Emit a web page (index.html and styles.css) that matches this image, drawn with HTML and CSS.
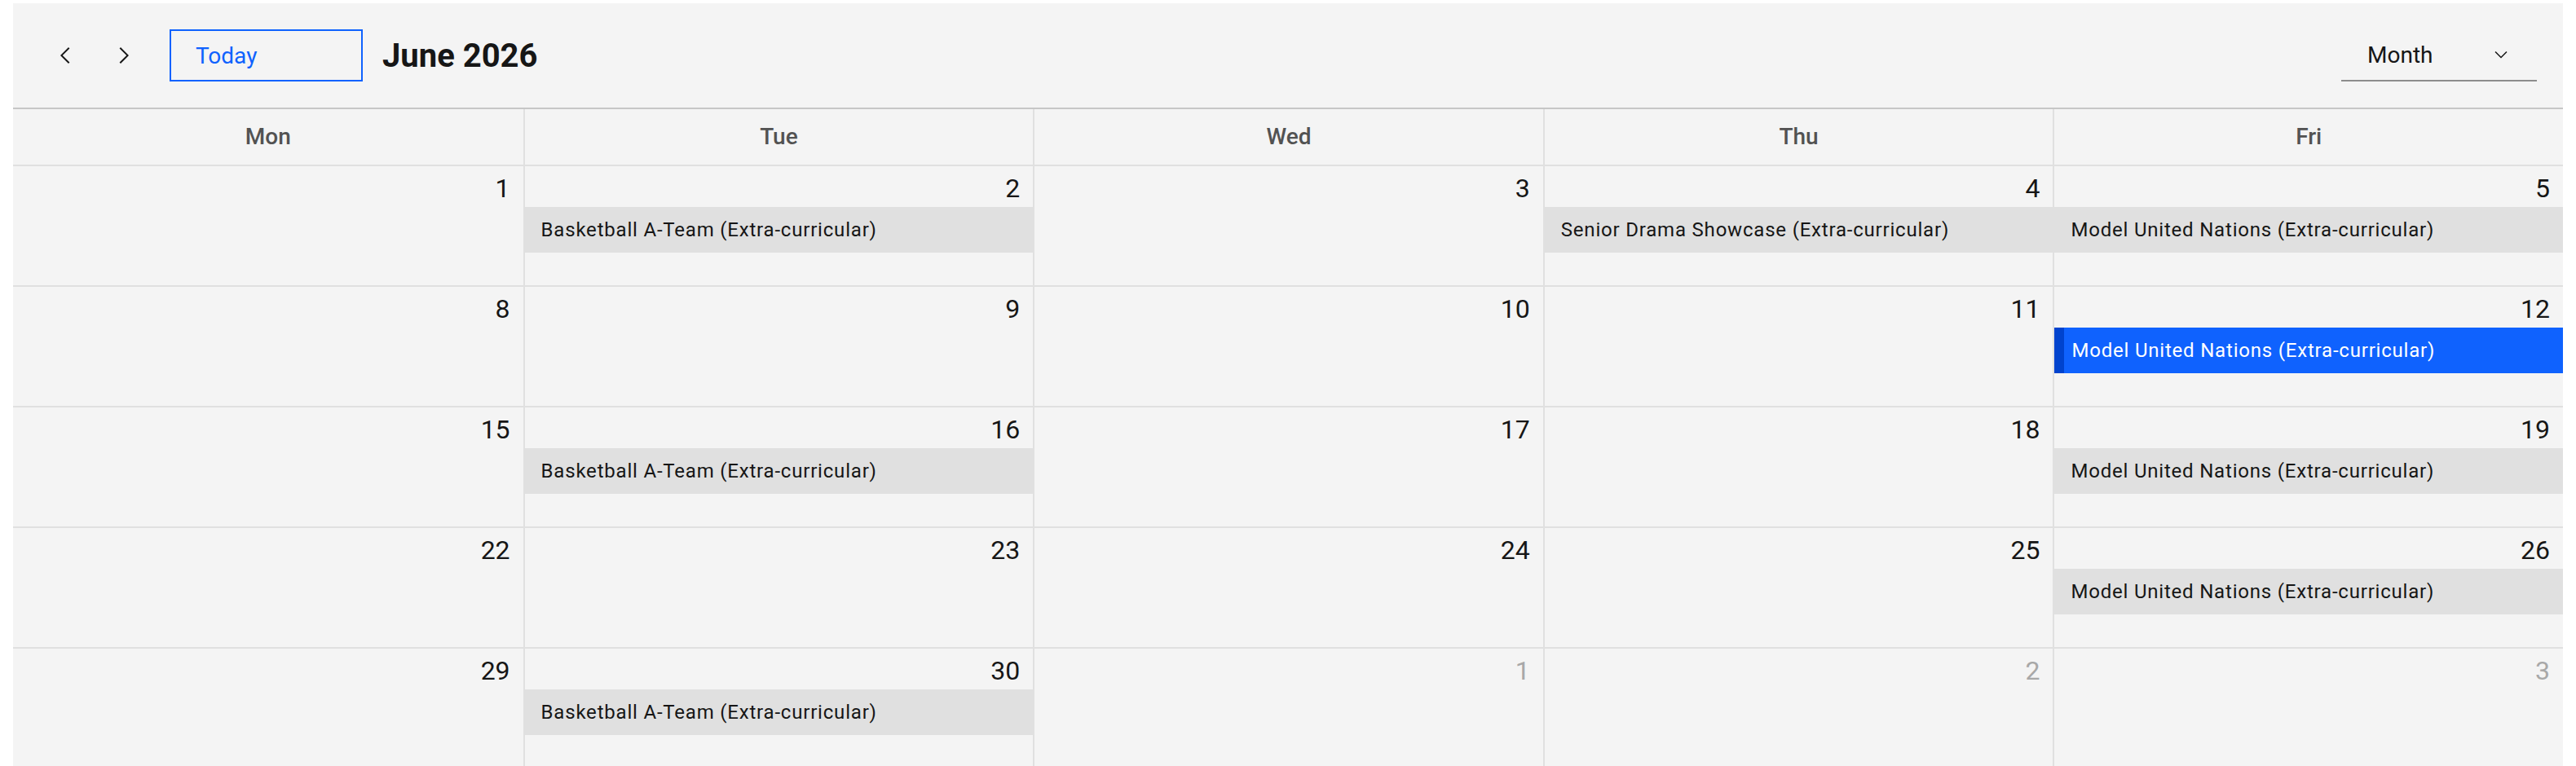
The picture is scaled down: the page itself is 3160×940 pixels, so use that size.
FILE: index.html
```html
<!DOCTYPE html>
<html lang="en">
<head>
    <meta charset="UTF-8">
    <meta name="viewport" content="width=device-width, initial-scale=1.0">
    <title>Calendar - June 2026</title>
    <link rel="stylesheet" href="styles.css">
</head>
<body>
    <div class="calendar">
        <div class="toolbar">
            <div class="toolbar-left">
                <button class="icon-button" title="Previous month">
                    <svg viewBox="0 0 32 32" width="32" height="32"><path d="M10 16L20 6l1.4 1.4-8.6 8.6 8.6 8.6L20 26z"/></svg>
                </button>
                <button class="icon-button" title="Next month">
                    <svg viewBox="0 0 32 32" width="32" height="32"><path d="M22 16L12 26l-1.4-1.4 8.6-8.6-8.6-8.6L12 6z"/></svg>
                </button>
                <button class="today-button">Today</button>
                <h1 class="month-title">June 2026</h1>
            </div>
            <div class="view-select">
                <span>Month</span>
                <svg viewBox="0 0 32 32" width="24" height="24"><path d="M16 22L6 12l1.4-1.4 8.6 8.6 8.6-8.6L26 12z"/></svg>
            </div>
        </div>

        <div class="month-grid">
            <div class="day-name">Mon</div>
            <div class="day-name">Tue</div>
            <div class="day-name">Wed</div>
            <div class="day-name">Thu</div>
            <div class="day-name">Fri</div>

            <!-- week 1 -->
            <div class="day"><div class="day-num">1</div></div>
            <div class="day"><div class="day-num">2</div><div class="event">Basketball A-Team (Extra-curricular)</div></div>
            <div class="day"><div class="day-num">3</div></div>
            <div class="day"><div class="day-num">4</div><div class="event">Senior Drama Showcase (Extra-curricular)</div></div>
            <div class="day"><div class="day-num">5</div><div class="event">Model United Nations (Extra-curricular)</div></div>

            <!-- week 2 -->
            <div class="day"><div class="day-num">8</div></div>
            <div class="day"><div class="day-num">9</div></div>
            <div class="day"><div class="day-num">10</div></div>
            <div class="day"><div class="day-num">11</div></div>
            <div class="day"><div class="day-num">12</div><div class="event event-selected">Model United Nations (Extra-curricular)</div></div>

            <!-- week 3 -->
            <div class="day"><div class="day-num">15</div></div>
            <div class="day"><div class="day-num">16</div><div class="event">Basketball A-Team (Extra-curricular)</div></div>
            <div class="day"><div class="day-num">17</div></div>
            <div class="day"><div class="day-num">18</div></div>
            <div class="day"><div class="day-num">19</div><div class="event">Model United Nations (Extra-curricular)</div></div>

            <!-- week 4 -->
            <div class="day"><div class="day-num">22</div></div>
            <div class="day"><div class="day-num">23</div></div>
            <div class="day"><div class="day-num">24</div></div>
            <div class="day"><div class="day-num">25</div></div>
            <div class="day"><div class="day-num">26</div><div class="event">Model United Nations (Extra-curricular)</div></div>

            <!-- week 5 -->
            <div class="day"><div class="day-num">29</div></div>
            <div class="day"><div class="day-num">30</div><div class="event">Basketball A-Team (Extra-curricular)</div></div>
            <div class="day other-month"><div class="day-num">1</div></div>
            <div class="day other-month"><div class="day-num">2</div></div>
            <div class="day other-month"><div class="day-num">3</div></div>
        </div>
    </div>
</body>
</html>
```

FILE: styles.css
```css
html, body {
    height: 100%;
}
body {
    font-family: Roboto, "Noto Sans", Arial, sans-serif;
    background-color: #ffffff;
    color: #161616;
    margin: 0;
    padding: 4px 16px 0;
    box-sizing: border-box;
    overflow: hidden;
}
.calendar {
    background-color: #f4f4f4;
    height: 100%;
    overflow: hidden;
}
.toolbar {
    display: flex;
    justify-content: space-between;
    align-items: center;
    height: 128px;
    padding: 0 32px;
    border-bottom: 2px solid #c6c6c6;
}
.toolbar-left {
    display: flex;
    align-items: center;
    gap: 8px;
}
.icon-button {
    width: 64px;
    height: 64px;
    display: flex;
    justify-content: center;
    align-items: center;
    background: none;
    border: none;
    padding: 0;
    cursor: pointer;
}
.icon-button svg {
    fill: #161616;
}
.today-button {
    margin-left: 16px;
    width: 237px;
    height: 64px;
    box-sizing: border-box;
    padding: 0 30px;
    text-align: left;
    font-family: inherit;
    font-size: 28px;
    color: #0f62fe;
    background: none;
    border: 2px solid #0f62fe;
    cursor: pointer;
}
.month-title {
    margin: 0 0 0 16px;
    font-size: 40px;
    font-weight: 700;
    color: #161616;
}
.view-select {
    width: 240px;
    height: 64px;
    box-sizing: border-box;
    display: flex;
    justify-content: space-between;
    align-items: center;
    padding: 0 32px;
    border-bottom: 2px solid #8d8d8d;
    font-size: 28px;
    color: #161616;
    cursor: pointer;
}
.view-select svg {
    fill: #161616;
}
.month-grid {
    display: grid;
    grid-template-columns: repeat(5, 1fr);
    grid-template-rows: 68px repeat(5, 148px);
}
.day-name {
    text-align: center;
    line-height: 68px;
    font-size: 28px;
    font-weight: 500;
    color: #525252;
}
.day {
    border-top: 2px solid #e0e0e0;
    min-width: 0;
}
.day-name, .day {
    border-left: 2px solid #e0e0e0;
    box-sizing: border-box;
}
.month-grid > :nth-child(5n+1) {
    border-left: none;
}
.day-num {
    text-align: right;
    padding: 7px 16px 0;
    height: 43px;
    line-height: 40px;
    font-size: 32px;
    color: #161616;
}
.other-month .day-num {
    color: #a8a8a8;
}
.event {
    height: 56px;
    line-height: 56px;
    padding-left: 20px;
    font-size: 24px;
    letter-spacing: 0.8px;
    color: #161616;
    background-color: #e0e0e0;
    white-space: nowrap;
    overflow: hidden;
}
.event-selected {
    background-color: #0f62fe;
    border-left: 12px solid #0043ce;
    padding-left: 9px;
    color: #ffffff;
}
```
